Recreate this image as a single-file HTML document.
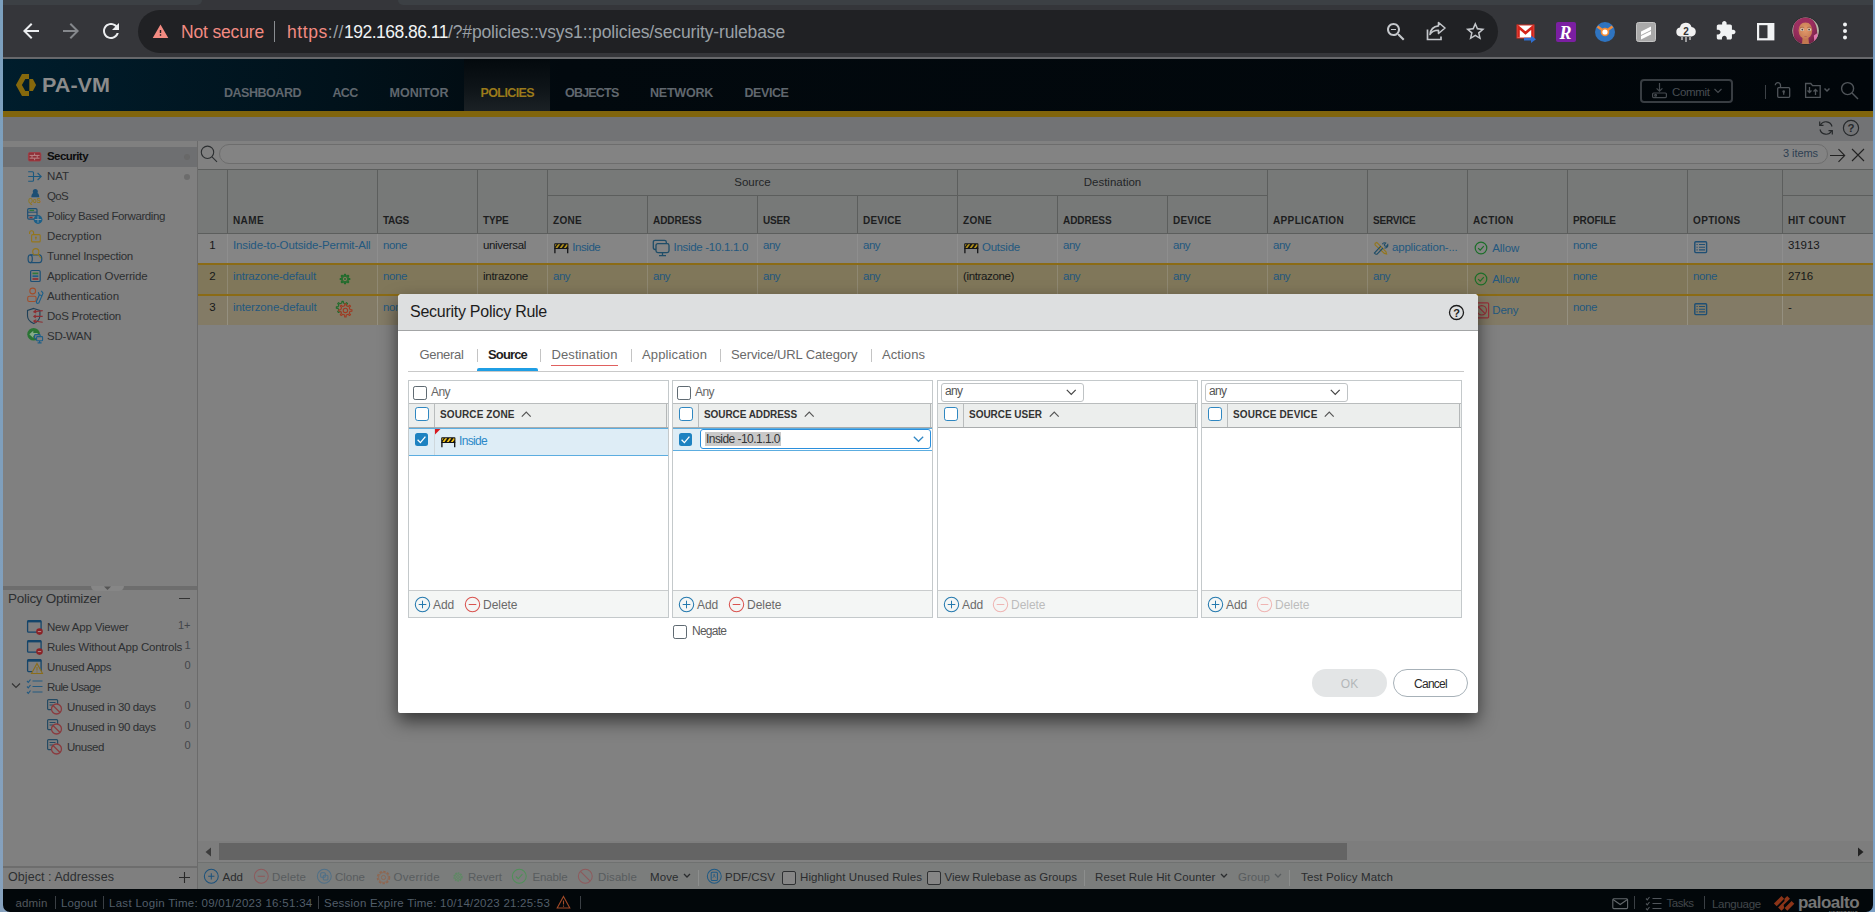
<!DOCTYPE html>
<html lang="en"><head><meta charset="utf-8"><title>PA-VM - Security Policy Rule</title>
<style>
html,body{margin:0;padding:0;overflow:hidden;}
body{width:1875px;height:912px;overflow:hidden;position:relative;background:#35363a;font-family:"Liberation Sans",sans-serif;}
#c{position:absolute;left:0;top:0;width:1875px;height:912px;overflow:hidden;}
#c>div,#c>svg,#c>span{position:absolute;}
#c>svg{overflow:visible;}
.t{white-space:pre;}
</style></head><body><div id="c">
<div style="left:0px;top:0px;width:1875px;height:59px;background:#35363a;"></div>
<div style="left:3px;top:0px;width:199px;height:4.7px;background:#3c4044;border-radius:0 0 7px 0;"></div>
<div style="left:398px;top:0px;width:1475px;height:4.7px;background:#3c4044;border-radius:0 0 0 7px;"></div>
<div style="left:0px;top:57px;width:1875px;height:2px;background:#67686b;"></div>
<div style="left:138px;top:10px;width:1360px;height:43px;background:#202124;border-radius:22px;"></div>
<svg style="left:18.5px;top:19.0px;" width="24" height="24" viewBox="0 0 24 24"><path fill="#eceef0" d="M20 11H7.83l5.59-5.59L12 4l-8 8 8 8 1.41-1.41L7.83 13H20v-2z"/></svg>
<svg style="left:58.5px;top:19.0px;" width="24" height="24" viewBox="0 0 24 24"><path fill="#85888c" d="M12 4l-1.41 1.41L16.17 11H4v2h12.17l-5.58 5.59L12 20l8-8z"/></svg>
<svg style="left:98.5px;top:19.0px;" width="24" height="24" viewBox="0 0 24 24"><path fill="#eceef0" d="M17.65 6.35C16.2 4.9 14.21 4 12 4c-4.42 0-7.99 3.58-7.99 8s3.57 8 7.99 8c3.73 0 6.84-2.55 7.73-6h-2.08c-.82 2.33-3.04 4-5.65 4-3.31 0-6-2.69-6-6s2.69-6 6-6c1.66 0 3.14.69 4.22 1.78L13 11h7V4l-2.35 2.35z"/></svg>
<svg style="left:152.0px;top:23.0px;" width="17" height="17" viewBox="0 0 24 24"><path fill="#f28b82" d="M1 21h22L12 2 1 21zm12-3h-2v-2h2v2zm0-4h-2v-4h2v4z"/></svg>
<span class="t" style="top:24px;font-size:17.5px;line-height:1;color:#f28b82;letter-spacing:-0.163px;left:181px;">Not secure</span>
<div style="left:274px;top:21px;width:1px;height:21px;background:#8a8d91;"></div>
<span class="t" style="top:24px;font-size:17.5px;line-height:1;color:#f28b82;letter-spacing:0.557px;left:287px;">https<span style="color:#9aa0a6">://</span></span>
<span class="t" style="top:24px;font-size:17.5px;line-height:1;color:#f1f3f4;letter-spacing:-0.510px;left:344px;">192.168.86.11</span>
<span class="t" style="top:24px;font-size:17.5px;line-height:1;color:#9aa0a6;letter-spacing:-0.138px;left:448px;">/?#policies::vsys1::policies/security-rulebase</span>
<svg style="left:1383.5px;top:20.0px;" width="24" height="24" viewBox="0 0 24 24"><path fill="#c4c7cb" d="M15.5 14h-.79l-.28-.27C15.41 12.59 16 11.11 16 9.5 16 5.91 13.09 3 9.5 3S3 5.91 3 9.5 5.91 16 9.5 16c1.61 0 3.09-.59 4.23-1.57l.27.28v.79l5 4.99L20.49 19l-4.99-5zm-6 0C7.01 14 5 11.99 5 9.5S7.01 5 9.5 5 14 7.01 14 9.5 11.99 14 9.5 14zM7 9h5v1H7z"/></svg>
<svg style="left:1425px;top:20px;" width="22" height="22" viewBox="0 0 22 22"><path fill="none" stroke="#c4c7cb" stroke-width="1.7" d="M2.5 9.5v10h13.5v-3"/><path fill="none" stroke="#c4c7cb" stroke-width="1.6" stroke-linejoin="round" d="M13.5 2.5l6.5 5.5-6.5 5.5v-3.3c-4.5 0-7 1.3-8.5 4.3 .5-5 3.5-8 8.5-8.6z"/></svg>
<svg style="left:1464.2px;top:20.0px;" width="22.6" height="22.6" viewBox="0 0 24 24"><path fill="#c4c7cb" d="M22 9.24l-7.19-.62L12 2 9.19 8.63 2 9.24l5.46 4.73L5.82 21 12 17.27 18.18 21l-1.63-7.03L22 9.24zM12 15.4l-3.76 2.27 1-4.28-3.32-2.88 4.38-.38L12 6.1l1.71 4.04 4.38.38-3.32 2.88 1 4.28L12 15.4z"/></svg>
<svg style="left:1515.5px;top:23px;" width="22" height="21" viewBox="0 0 22 21"><rect x="1" y="2" width="17" height="13" fill="#fff" stroke="#d93025" stroke-width="1"/><path d="M2.5 14.5V4l7 6 7-6v10.5" fill="none" stroke="#d4241a" stroke-width="2.6"/><path d="M8 14.8h7v-2.3l5 3.7-5 3.7v-2.3H8z" fill="#2f6fd0"/></svg>
<div style="left:1556px;top:22px;width:19.5px;height:19.5px;background:#7b1fa2;border-radius:2px;"></div>
<span class="t" style="top:24px;font-size:18px;line-height:1;color:#fff;font-weight:700;left:1565.5px;transform:translateX(-50%);font-family:'Liberation Serif',serif;font-style:italic;">R</span>
<svg style="left:1594.4px;top:20.7px;" width="22" height="22" viewBox="0 0 22 22"><circle cx="11" cy="11" r="10" fill="#2f74c0"/><path d="M3.5 5.5L11 11l7.5-5.5" fill="none" stroke="#f28c38" stroke-width="2.6"/><circle cx="11" cy="11" r="4.3" fill="#f28c38"/><circle cx="11" cy="11" r="2.6" fill="#fff"/></svg>
<svg style="left:1635.5px;top:22px;" width="20" height="20" viewBox="0 0 20 20"><rect x=".5" y=".5" width="19" height="19" rx="2" fill="#a9a9a9" stroke="#c4c4c4"/><path d="M5 9.5l10-5v3.5l-10 5zM5 14l10-5v3.5l-10 5z" fill="#fff"/></svg>
<svg style="left:1674.5px;top:21px;" width="22" height="23" viewBox="0 0 22 23"><path d="M5.5 15.5a4.5 4.5 0 0 1-.6-8.9 6 6 0 0 1 11.6-.6 4.8 4.8 0 0 1 .3 9.5z" fill="#f1f1f1"/><path d="M7 16v3M11 16v5M15 16v3" stroke="#e0e0e0" stroke-width="1.2"/><text x="11" y="13.5" font-family="Liberation Sans" font-size="10" font-weight="700" fill="#333" text-anchor="middle">2</text></svg>
<svg style="left:1714.8px;top:20.3px;" width="21.4" height="21.4" viewBox="0 0 24 24"><path fill="#f1f3f4" d="M20.5 11H19V7c0-1.1-.9-2-2-2h-4V3.5C13 2.12 11.88 1 10.5 1S8 2.12 8 3.5V5H4c-1.1 0-1.99.9-1.99 2v3.8H3.5c1.49 0 2.7 1.21 2.7 2.7s-1.21 2.7-2.7 2.7H2V20c0 1.1.9 2 2 2h3.8v-1.5c0-1.49 1.21-2.7 2.7-2.7 1.49 0 2.7 1.21 2.7 2.7V22H17c1.1 0 2-.9 2-2v-4h1.5c1.38 0 2.5-1.12 2.5-2.5S21.88 11 20.5 11z"/></svg>
<svg style="left:1757px;top:23px;" width="17.4" height="17.4" viewBox="0 0 17.4 17.4"><rect x="1.1" y="1.1" width="15.2" height="15.2" fill="none" stroke="#f1f3f4" stroke-width="2.2"/><rect x="10.500" y="1" width="6" height="15.400" fill="#f1f3f4"/></svg>
<svg style="left:1790px;top:15px;" width="32" height="32" viewBox="1790 15 32 32"><defs><clipPath id="av"><circle cx="1805.600" cy="30.800" r="13.300"/></clipPath><radialGradient id="hg" cx=".42" cy=".25" r=".85"><stop offset="0" stop-color="#ad386c"/><stop offset=".6" stop-color="#8e2a57"/><stop offset="1" stop-color="#5e1c3c"/></radialGradient><radialGradient id="fg" cx=".5" cy=".45" r=".6"><stop offset="0" stop-color="#e39a6c"/><stop offset="1" stop-color="#c47a52"/></radialGradient></defs><circle cx="1805.600" cy="30.800" r="14" fill="#2a2b2e"/><g clip-path="url(#av)"><rect x="1790" y="15" width="32" height="32" fill="#b9b7a7"/><path d="M1804.500 17.300c-7.500 0-11.800 6-11.300 14.500 .2 6 2 11 6 14.200h14c3-3 4.300-7.500 4-13.500-.2-9.500-4.500-15.200-12.700-15.200z" fill="url(#hg)"/><path d="M1802.600 37.500h5.800l.8 8.500h-7.400z" fill="#c27850"/><ellipse cx="1805.400" cy="30.600" rx="6.800" ry="8.500" fill="url(#fg)"/><path d="M1797.600 28c-.3-6.500 3.500-9.800 8-9.800s8.300 3.300 8 9.800c-1.800-4-4.500-5.600-8-5.600s-6.200 1.600-8 5.600z" fill="#9c2e5e"/><ellipse cx="1802.100" cy="29.700" rx="1.900" ry="1.400" fill="#d6d0c6"/><ellipse cx="1809.300" cy="29.700" rx="1.900" ry="1.400" fill="#d6d0c6"/><circle cx="1802.300" cy="29.600" r=".9" fill="#5b3b2b"/><circle cx="1809.100" cy="29.600" r=".9" fill="#5b3b2b"/><path d="M1800 27.700q2.100-1 4.200-.2M1807.200 27.500q2.100-.8 4.200.2" stroke="#8a5a42" stroke-width=".5" fill="none"/><path d="M1803.900 36.400q1.700-.7 3.400 0-1.700 1.300-3.400 0z" fill="#b5625c"/><path d="M1813.800 35.500l3.700-2.500v6.500l-3.200 2z" fill="#de78ae"/></g></svg>
<svg style="left:1840px;top:19px;" width="10" height="25" viewBox="0 0 10 25"><circle cx="5" cy="5.5" r="2" fill="#f1f3f4"/><circle cx="5" cy="12" r="2" fill="#f1f3f4"/><circle cx="5" cy="18.5" r="2" fill="#f1f3f4"/></svg>
<div style="left:3px;top:59px;width:1870px;height:52px;background:linear-gradient(90deg,#001d2c 0px,#01121b 330px,#02090e 560px,#01060a 100%);"></div>
<div style="left:464px;top:59px;width:86px;height:52px;background:linear-gradient(180deg,#03090d 0%,#0e1418 55%,#1b2125 100%);"></div>
<div style="left:3px;top:111px;width:1870px;height:6px;background:#81650c;"></div>
<svg style="left:15px;top:73px;" width="22" height="24" viewBox="0 0 22 24"><path fill="#85680c" d="M7 1h7v5.100h-3.700L6.900 12l3.400 5.900H14V23H7L.9 12z"/><path fill="#85680c" d="M14.300 6.100h3.600L21.100 12l-3.200 5.900h-3.600z"/></svg>
<span class="t" style="top:76px;font-size:19.5px;line-height:1;color:#8b8b8b;font-weight:700;transform:scaleX(1.1077);transform-origin:0 0;left:42px;">PA-VM</span>
<span class="t" style="top:87px;font-size:12.5px;line-height:1;color:#60676e;font-weight:700;letter-spacing:-0.472px;left:224px;">DASHBOARD</span>
<span class="t" style="top:87px;font-size:12.5px;line-height:1;color:#60676e;font-weight:700;letter-spacing:-0.698px;left:332.5px;">ACC</span>
<span class="t" style="top:87px;font-size:12.5px;line-height:1;color:#60676e;font-weight:700;letter-spacing:0.029px;left:389.5px;">MONITOR</span>
<span class="t" style="top:87px;font-size:12.5px;line-height:1;color:#60676e;font-weight:700;letter-spacing:-0.792px;left:565px;">OBJECTS</span>
<span class="t" style="top:87px;font-size:12.5px;line-height:1;color:#60676e;font-weight:700;letter-spacing:-0.225px;left:650px;">NETWORK</span>
<span class="t" style="top:87px;font-size:12.5px;line-height:1;color:#60676e;font-weight:700;letter-spacing:-0.424px;left:744.5px;">DEVICE</span>
<span class="t" style="top:87px;font-size:12.5px;line-height:1;color:#9b7a1a;font-weight:700;letter-spacing:-0.605px;left:480.5px;">POLICIES</span>
<div style="left:1640px;top:79px;width:93px;height:24px;border:2px solid #383d42;border-radius:4px;box-sizing:border-box;"></div>
<svg style="left:1651px;top:82px;" width="17" height="17" viewBox="0 0 17 17"><g fill="none" stroke="#464b50" stroke-width="1.2"><path d="M8.5 1v8M5.6 6.3l2.9 2.9 2.9-2.9"/><rect x="1.6" y="11" width="13.8" height="4.6" rx="1"/><circle cx="4.6" cy="13.3" r=".9"/></g></svg>
<span class="t" style="top:87px;font-size:11.5px;line-height:1;color:#484d52;letter-spacing:-0.354px;left:1672px;">Commit</span>
<svg style="left:1713px;top:87px;" width="10" height="8" viewBox="0 0 10 8"><path d="M1.5 2l3.5 3.5L8.500 2" fill="none" stroke="#464b50" stroke-width="1.2"/></svg>
<div style="left:1765px;top:85px;width:1px;height:14px;background:#3c4146;"></div>
<svg style="left:1774px;top:81px;" width="18" height="18" viewBox="0 0 18 18"><g fill="none" stroke="#50555a" stroke-width="1.3"><rect x="3.7" y="6.7" width="12" height="9.6" rx="1"/><path d="M6.5 6.5V4.2a2.6 2.6 0 0 0-5.2 0"/></g><circle cx="9.7" cy="10.6" r="1.3" fill="#50555a"/><path d="M9.7 11v2.8" stroke="#50555a" stroke-width="1.3"/></svg>
<svg style="left:1804px;top:82px;" width="28" height="17" viewBox="0 0 28 17"><g fill="none" stroke="#50555a" stroke-width="1.3"><path d="M1.6 1.5h5.2l1.8 2.2h7.6v11.6H1.600z"/><path d="M5.5 5v5.5M3.500 8.500l2 2 2-2M11.500 13V7.500M9.500 9.500l2-2 2 2"/><path d="M20.5 6.500l2.500 2.500 2.500-2.500" stroke-width="1.5"/></g></svg>
<svg style="left:1840px;top:81px;" width="19" height="19" viewBox="0 0 19 19"><g fill="none" stroke="#50555a" stroke-width="1.4"><circle cx="7.600" cy="7.600" r="6"/><path d="M12 12l6 6"/></g></svg>
<div style="left:3px;top:117px;width:1870px;height:24px;background:#727375;"></div>
<svg style="left:1817px;top:118.8px;" width="18" height="18" viewBox="0 0 18 18"><g fill="none" stroke="#26292b" stroke-width="1.200" transform="translate(18 0) scale(-1 1)"><path d="M3 7.500a6.300 6.300 0 0 1 11.600-1.500M15 10.500a6.300 6.300 0 0 1-11.600 1.500"/><path d="M15.300 2.500v3.800h-3.800M2.700 15.500v-3.800h3.800"/></g></svg>
<svg style="left:1842px;top:119px;" width="18" height="18" viewBox="0 0 18 18"><circle cx="9" cy="9" r="7.600" fill="none" stroke="#26292b" stroke-width="1.2"/><text x="9" y="13" font-family="Liberation Sans" font-size="11.500" font-weight="700" fill="#26292b" text-anchor="middle">?</text></svg>
<div style="left:3px;top:141px;width:194px;height:725px;background:#808080;"></div>
<div style="left:197px;top:141px;width:1px;height:748px;background:#6b6b6b;"></div>
<div style="left:3px;top:147px;width:194px;height:20px;background:#6e6f71;"></div>
<div style="left:184px;top:154px;width:6px;height:6px;background:#686868;border-radius:3px;"></div>
<div style="left:184px;top:174px;width:6px;height:6px;background:#6c6c6c;border-radius:3px;"></div>
<span class="t" style="top:151px;font-size:11.5px;line-height:1;color:#0c0c0d;font-weight:700;letter-spacing:-0.549px;left:47px;">Security</span>
<span class="t" style="top:171px;font-size:11.5px;line-height:1;color:#2d2f31;letter-spacing:-0.052px;left:47px;">NAT</span>
<span class="t" style="top:191px;font-size:11.5px;line-height:1;color:#2d2f31;letter-spacing:-0.672px;left:47px;">QoS</span>
<span class="t" style="top:211px;font-size:11.5px;line-height:1;color:#2d2f31;letter-spacing:-0.400px;left:47px;">Policy Based Forwarding</span>
<span class="t" style="top:231px;font-size:11.5px;line-height:1;color:#2d2f31;letter-spacing:-0.047px;left:47px;">Decryption</span>
<span class="t" style="top:251px;font-size:11.5px;line-height:1;color:#2d2f31;letter-spacing:-0.256px;left:47px;">Tunnel Inspection</span>
<span class="t" style="top:271px;font-size:11.5px;line-height:1;color:#2d2f31;letter-spacing:-0.153px;left:47px;">Application Override</span>
<span class="t" style="top:291px;font-size:11.5px;line-height:1;color:#2d2f31;letter-spacing:-0.064px;left:47px;">Authentication</span>
<span class="t" style="top:311px;font-size:11.5px;line-height:1;color:#2d2f31;letter-spacing:-0.240px;left:47px;">DoS Protection</span>
<span class="t" style="top:331px;font-size:11.5px;line-height:1;color:#2d2f31;letter-spacing:-0.286px;left:47px;">SD-WAN</span>
<svg style="left:26px;top:149px;" width="18" height="14" viewBox="26 149 18 14"><rect x="28.400" y="152.600" width="12.400" height="8.400" rx="1.400" fill="#8f3038" stroke="#a63a43" stroke-width=".8"/><path d="M29.600 155.400h10M29.600 158.200h10" stroke="#c39a9c" stroke-width=".8"/><path d="M34.600 153.400v1.600M32 155.800v2M37.200 155.800v2M34.600 158.600v1.600" stroke="#c39a9c" stroke-width=".8"/></svg>
<svg style="left:26px;top:169px;" width="18" height="15" viewBox="26 169 18 15"><g fill="none" stroke="#1c587e" stroke-width="1.100"><path d="M28.200 176.500h12.600M37.600 173l3.600 3.500-3.600 3.500M28.200 171.700h4.300a1 1 0 0 1 1 1v7.600a1 1 0 0 1-1 1h-4.300"/></g></svg>
<svg style="left:26px;top:187px;" width="18" height="18" viewBox="26 187 18 18"><circle cx="35.300" cy="191.600" r="2.500" fill="#1d4f74"/><path d="M31.300 197.200c0-3.300 1.700-4.600 4-4.600s4 1.300 4 4.600z" fill="#1d4f74"/><text x="34.900" y="203" font-family="Liberation Sans" font-size="7.200" font-weight="700" fill="#94761c" text-anchor="middle" textLength="12.600" lengthAdjust="spacingAndGlyphs">QoS</text></svg>
<svg style="left:26px;top:207px;" width="18" height="18" viewBox="26 207 18 18"><rect x="27.700" y="208.600" width="9.300" height="10.600" rx="1.200" fill="none" stroke="#1d4f74" stroke-width="1.200"/><path d="M27.700 212.200h9.300M27.700 215.700h9.300" stroke="#1d4f74" stroke-width="1"/><path d="M29.500 210.400h4.600" stroke="#2f7a3a" stroke-width="1.300"/><path d="M29.500 217.500h3" stroke="#8c2f33" stroke-width="1.300"/><circle cx="38" cy="219.500" r="4.400" fill="#1d5f88"/><path d="M38 216.200v6.600M34.700 219.500h6.600" stroke="#8a949c" stroke-width=".9"/></svg>
<svg style="left:26px;top:228px;" width="18" height="16" viewBox="26 228 18 16"><g fill="none" stroke="#94761c" stroke-width="1.100"><rect x="31.600" y="234.600" width="8.600" height="7.300" rx="1"/><path d="M33.600 234.600v-1.900a2 2 0 0 0-4 0v1.300"/></g><circle cx="35.900" cy="237.500" r="1" fill="#94761c"/><path d="M35.900 237.500v2.200" stroke="#94761c" stroke-width="1"/></svg>
<svg style="left:26px;top:247px;" width="18" height="17" viewBox="26 247 18 17"><g fill="none" stroke="#1d4f74" stroke-width="1.200"><path d="M30.200 254.800h9a2.600 3.900 0 0 1 0 7.800h-9"/><ellipse cx="30.200" cy="258.700" rx="2.100" ry="3.900"/></g><g fill="none" stroke="#94761c" stroke-width="1.100"><circle cx="35.800" cy="251.700" r="3.100"/><path d="M37.900 254l3 4.200"/></g></svg>
<svg style="left:26px;top:268px;" width="18" height="16" viewBox="26 268 18 16"><rect x="30.600" y="270.500" width="9.600" height="11" rx="1.300" fill="none" stroke="#1d4f74" stroke-width="1.200"/><path d="M32.500 273.400h5.800" stroke="#2f7a3a" stroke-width="1.700"/><path d="M32.500 276.200h5.800" stroke="#1d5f88" stroke-width="1.700"/><path d="M32.500 279h5.800" stroke="#8c2f33" stroke-width="1.700"/></svg>
<svg style="left:26px;top:287px;" width="18" height="18" viewBox="26 287 18 18"><g fill="none" stroke="#a04e2c" stroke-width="1.100"><circle cx="32.700" cy="291" r="2.900"/><rect x="27.700" y="296.300" width="8.400" height="5.200" rx="1.600"/></g><g fill="none" stroke="#1d5f88" stroke-width="1.100"><path d="M36.200 302l3.200-7.300M38.700 303.200l3.200-7.300"/><path d="M36.200 302l.9 1.400 1.600-.2"/><path d="M38.300 292.300l1 2.600 2.700.8 1-2.600-1.700-2.300"/></g></svg>
<svg style="left:26px;top:307px;" width="18" height="18" viewBox="26 307 18 18"><path d="M33.700 308.400l6.200 2.100v5.300c0 3.800-2.700 6.200-6.200 7.800-3.500-1.600-6.200-4-6.200-7.800v-5.300z" fill="none" stroke="#1f4058" stroke-width="1.100"/><g stroke="#8c2f33" stroke-width="1.100" fill="none"><path d="M42.700 310.600l-8.700 1.200M42.700 316.400h-8.700M42.700 322.200l-8.700-1.200"/><path d="M36 310l-2.200 1.800 2.500 1.300M35.800 314.900l-2 1.500 2 1.500M36.300 319.700l-2.500 1.300 2.200 1.800"/></g></svg>
<svg style="left:26px;top:327px;" width="18" height="17" viewBox="26 327 18 17"><circle cx="33.600" cy="334.300" r="6.300" fill="#2a7434"/><path d="M29.300 334.300l4-3.600v2.200h4.300v2.800h-4.300v2.200z" fill="#86ab8a"/><g fill="#808080" stroke="#1d5f88" stroke-width="1.100"><rect x="34.600" y="334.600" width="5.600" height="4" rx=".8"/><rect x="36.600" y="336.600" width="6" height="4.200" rx=".8"/></g><path d="M39.600 341v1.700M37.600 342.900h4" stroke="#1d5f88" stroke-width="1.100"/></svg>
<div style="left:3px;top:586px;width:194px;height:4px;background:#6d6d6d;"></div>
<div style="left:91px;top:586px;width:33px;height:5px;background:#868686;border-radius:0 0 5px 5px;"></div>
<svg style="left:103px;top:586px;" width="9" height="5" viewBox="0 0 9 5"><path d="M1 0.500h7l-3.500 3.500z" fill="#555"/></svg>
<span class="t" style="top:592px;font-size:13.5px;line-height:1;color:#2d2f31;letter-spacing:-0.283px;left:8px;">Policy Optimizer</span>
<div style="left:179px;top:598px;width:11px;height:1px;background:#333;"></div>
<span class="t" style="top:622px;font-size:11.5px;line-height:1;color:#2d2f31;letter-spacing:-0.191px;left:47px;">New App Viewer</span>
<span class="t" style="top:620px;font-size:11px;line-height:1;color:#43464a;right:1684.5px;">1+</span>
<svg style="left:26px;top:619px;" width="18" height="18" viewBox="0 0 18 18"><rect x="1.600" y="1.600" width="13.500" height="11.600" rx="1" fill="none" stroke="#15456a" stroke-width="1.300"/><path d="M1.600 2.400h13.500" stroke="#15456a" stroke-width="2"/><circle cx="13.500" cy="12.600" r="3.300" fill="#8a2226"/><path d="M11.800 12.600h3.400" stroke="#b08a8c" stroke-width="1"/></svg>
<span class="t" style="top:642px;font-size:11.5px;line-height:1;color:#2d2f31;letter-spacing:-0.216px;left:47px;">Rules Without App Controls</span>
<span class="t" style="top:640px;font-size:11px;line-height:1;color:#43464a;right:1684.5px;">1</span>
<svg style="left:26px;top:639px;" width="18" height="18" viewBox="0 0 18 18"><rect x="1.600" y="1.600" width="13.500" height="11.600" rx="1" fill="none" stroke="#15456a" stroke-width="1.300"/><path d="M1.600 2.400h13.500" stroke="#15456a" stroke-width="2"/><circle cx="13.500" cy="12.600" r="3.300" fill="#8a2226"/><path d="M11.800 12.600h3.400" stroke="#b08a8c" stroke-width="1"/></svg>
<span class="t" style="top:662px;font-size:11.5px;line-height:1;color:#2d2f31;letter-spacing:-0.402px;left:47px;">Unused Apps</span>
<span class="t" style="top:660px;font-size:11px;line-height:1;color:#43464a;right:1684.5px;">0</span>
<svg style="left:26px;top:658px;" width="18" height="18" viewBox="0 0 18 18"><rect x="1.600" y="1.600" width="13.500" height="12" rx="1" fill="none" stroke="#15456a" stroke-width="1.300"/><path d="M1.600 2.600h13.500" stroke="#15456a" stroke-width="2.200"/><path d="M11 5.500l5.500 10h-11z" fill="#808080" stroke="#8a6d1a" stroke-width="1.100"/><path d="M11 9v3.500M11 13.500v1" stroke="#8a6d1a" stroke-width="1"/></svg>
<span class="t" style="top:682px;font-size:11.5px;line-height:1;color:#2d2f31;letter-spacing:-0.659px;left:47px;">Rule Usage</span>
<svg style="left:11px;top:682px;" width="10" height="8" viewBox="0 0 10 8"><path d="M1 1.500l4 4 4-4" fill="none" stroke="#333" stroke-width="1.100"/></svg>
<svg style="left:26px;top:678px;" width="18" height="18" viewBox="0 0 18 18"><g fill="none" stroke="#245a80" stroke-width="1.200"><path d="M6.500 3h10M6.500 8.500h10M6.500 14h10"/><path d="M1 3l1.300 1.300 2.200-2.800M1 8.500l1.300 1.300 2.200-2.800M1 14l1.300 1.300 2.200-2.800" stroke-dasharray="none"/></g></svg>
<span class="t" style="top:702px;font-size:11.5px;line-height:1;color:#2d2f31;letter-spacing:-0.398px;left:67px;">Unused in 30 days</span>
<span class="t" style="top:700px;font-size:11px;line-height:1;color:#43464a;right:1684.5px;">0</span>
<svg style="left:46px;top:698px;" width="18" height="18" viewBox="0 0 18 18"><g fill="none" stroke="#244a63" stroke-width="1.200"><rect x="1.600" y="1.600" width="10" height="10" rx="1"/><path d="M3.500 4.500h6M3.500 7h4"/></g><circle cx="10.500" cy="11" r="5" fill="#808080" stroke="#8a3a3e" stroke-width="1.300"/><path d="M7 7.500l7 7" stroke="#8a3a3e" stroke-width="1.300"/></svg>
<span class="t" style="top:722px;font-size:11.5px;line-height:1;color:#2d2f31;letter-spacing:-0.398px;left:67px;">Unused in 90 days</span>
<span class="t" style="top:720px;font-size:11px;line-height:1;color:#43464a;right:1684.5px;">0</span>
<svg style="left:46px;top:718px;" width="18" height="18" viewBox="0 0 18 18"><g fill="none" stroke="#244a63" stroke-width="1.200"><rect x="1.600" y="1.600" width="10" height="10" rx="1"/><path d="M3.500 4.500h6M3.500 7h4"/></g><circle cx="10.500" cy="11" r="5" fill="#808080" stroke="#8a3a3e" stroke-width="1.300"/><path d="M7 7.500l7 7" stroke="#8a3a3e" stroke-width="1.300"/></svg>
<span class="t" style="top:742px;font-size:11.5px;line-height:1;color:#2d2f31;letter-spacing:-0.440px;left:67px;">Unused</span>
<span class="t" style="top:740px;font-size:11px;line-height:1;color:#43464a;right:1684.5px;">0</span>
<svg style="left:46px;top:738px;" width="18" height="18" viewBox="0 0 18 18"><g fill="none" stroke="#244a63" stroke-width="1.200"><rect x="1.600" y="1.600" width="10" height="10" rx="1"/><path d="M3.500 4.500h6M3.500 7h4"/></g><circle cx="10.500" cy="11" r="5" fill="#808080" stroke="#8a3a3e" stroke-width="1.300"/><path d="M7 7.500l7 7" stroke="#8a3a3e" stroke-width="1.300"/></svg>
<div style="left:3px;top:866px;width:194px;height:2px;background:#6d6d6d;"></div>
<div style="left:3px;top:868px;width:194px;height:21px;background:#7f7f7f;"></div>
<span class="t" style="top:871px;font-size:12.5px;line-height:1;color:#2d2f31;letter-spacing:0.060px;left:8px;">Object : Addresses</span>
<svg style="left:179px;top:872px;" width="11" height="11" viewBox="0 0 11 11"><path d="M5.500 0v11M0 5.500h11" stroke="#2a2a2a" stroke-width="1.100"/></svg>
<div style="left:198px;top:141px;width:1675px;height:725px;background:#818181;"></div>
<svg style="left:199px;top:144px;" width="20" height="20" viewBox="0 0 20 20"><g fill="none" stroke="#2c2f31" stroke-width="1.100"><circle cx="8.500" cy="8.300" r="6.200"/><path d="M13 12.800l5 5"/></g></svg>
<div style="left:219px;top:144px;width:1609px;height:20px;background:#838383;border:1px solid #6d6d6d;border-radius:10px;box-sizing:border-box;"></div>
<span class="t" style="top:148px;font-size:11px;line-height:1;color:#2e3f52;letter-spacing:-0.067px;right:57px;">3 items</span>
<svg style="left:1829.5px;top:148px;" width="16" height="14" viewBox="0 0 16 14"><path d="M0 7.500h14.500M8.500 1.200l6.200 6.300-6.200 6.300" fill="none" stroke="#222" stroke-width="1.100"/></svg>
<svg style="left:1851px;top:148px;" width="14" height="14" viewBox="0 0 14 14"><path d="M1 1l12 12M13 1L1 13" fill="none" stroke="#222" stroke-width="1.100"/></svg>
<div style="left:198px;top:169px;width:1675px;height:65px;background:#777978;"></div>
<div style="left:198px;top:169px;width:1675px;height:1px;background:#5c5e5d;"></div>
<div style="left:198px;top:233px;width:1675px;height:1px;background:#5c5e5d;"></div>
<div style="left:227px;top:170px;width:1px;height:63px;background:#5c5e5d;"></div>
<div style="left:377px;top:170px;width:1px;height:63px;background:#5c5e5d;"></div>
<div style="left:477px;top:170px;width:1px;height:63px;background:#5c5e5d;"></div>
<div style="left:547px;top:170px;width:1px;height:63px;background:#5c5e5d;"></div>
<div style="left:647px;top:170px;width:1px;height:63px;background:#5c5e5d;"></div>
<div style="left:757px;top:170px;width:1px;height:63px;background:#5c5e5d;"></div>
<div style="left:857px;top:170px;width:1px;height:63px;background:#5c5e5d;"></div>
<div style="left:957px;top:170px;width:1px;height:63px;background:#5c5e5d;"></div>
<div style="left:1057px;top:170px;width:1px;height:63px;background:#5c5e5d;"></div>
<div style="left:1167px;top:170px;width:1px;height:63px;background:#5c5e5d;"></div>
<div style="left:1267px;top:170px;width:1px;height:63px;background:#5c5e5d;"></div>
<div style="left:1367px;top:170px;width:1px;height:63px;background:#5c5e5d;"></div>
<div style="left:1467px;top:170px;width:1px;height:63px;background:#5c5e5d;"></div>
<div style="left:1567px;top:170px;width:1px;height:63px;background:#5c5e5d;"></div>
<div style="left:1687px;top:170px;width:1px;height:63px;background:#5c5e5d;"></div>
<div style="left:1782px;top:170px;width:1px;height:63px;background:#5c5e5d;"></div>
<div style="left:548px;top:195px;width:719px;height:1px;background:#5c5e5d;"></div>
<div style="left:1783px;top:195px;width:90px;height:1px;background:#5c5e5d;"></div>
<div style="left:647px;top:170px;width:1px;height:25px;background:#777978;"></div>
<div style="left:757px;top:170px;width:1px;height:25px;background:#777978;"></div>
<div style="left:857px;top:170px;width:1px;height:25px;background:#777978;"></div>
<div style="left:1057px;top:170px;width:1px;height:25px;background:#777978;"></div>
<div style="left:1167px;top:170px;width:1px;height:25px;background:#777978;"></div>
<span class="t" style="top:177px;font-size:11.5px;line-height:1;color:#232527;left:752.5px;transform:translateX(-50%);">Source</span>
<span class="t" style="top:177px;font-size:11.5px;line-height:1;color:#232527;left:1112.5px;transform:translateX(-50%);">Destination</span>
<span class="t" style="top:216px;font-size:10px;line-height:1;color:#1d1e1f;font-weight:700;letter-spacing:0.387px;left:233px;">NAME</span>
<span class="t" style="top:216px;font-size:10px;line-height:1;color:#1d1e1f;font-weight:700;letter-spacing:-0.262px;left:383px;">TAGS</span>
<span class="t" style="top:216px;font-size:10px;line-height:1;color:#1d1e1f;font-weight:700;letter-spacing:-0.156px;left:483px;">TYPE</span>
<span class="t" style="top:216px;font-size:10px;line-height:1;color:#1d1e1f;font-weight:700;letter-spacing:0.305px;left:553px;">ZONE</span>
<span class="t" style="top:216px;font-size:10px;line-height:1;color:#1d1e1f;font-weight:700;letter-spacing:-0.058px;left:653px;">ADDRESS</span>
<span class="t" style="top:216px;font-size:10px;line-height:1;color:#1d1e1f;font-weight:700;letter-spacing:-0.199px;left:763px;">USER</span>
<span class="t" style="top:216px;font-size:10px;line-height:1;color:#1d1e1f;font-weight:700;letter-spacing:0.211px;left:863px;">DEVICE</span>
<span class="t" style="top:216px;font-size:10px;line-height:1;color:#1d1e1f;font-weight:700;letter-spacing:0.305px;left:963px;">ZONE</span>
<span class="t" style="top:216px;font-size:10px;line-height:1;color:#1d1e1f;font-weight:700;letter-spacing:-0.058px;left:1063px;">ADDRESS</span>
<span class="t" style="top:216px;font-size:10px;line-height:1;color:#1d1e1f;font-weight:700;letter-spacing:0.211px;left:1173px;">DEVICE</span>
<span class="t" style="top:216px;font-size:10px;line-height:1;color:#1d1e1f;font-weight:700;letter-spacing:0.359px;left:1273px;">APPLICATION</span>
<span class="t" style="top:216px;font-size:10px;line-height:1;color:#1d1e1f;font-weight:700;letter-spacing:-0.176px;left:1373px;">SERVICE</span>
<span class="t" style="top:216px;font-size:10px;line-height:1;color:#1d1e1f;font-weight:700;letter-spacing:0.359px;left:1473px;">ACTION</span>
<span class="t" style="top:216px;font-size:10px;line-height:1;color:#1d1e1f;font-weight:700;letter-spacing:-0.049px;left:1573px;">PROFILE</span>
<span class="t" style="top:216px;font-size:10px;line-height:1;color:#1d1e1f;font-weight:700;letter-spacing:0.355px;left:1693px;">OPTIONS</span>
<span class="t" style="top:216px;font-size:10px;line-height:1;color:#1d1e1f;font-weight:700;letter-spacing:0.394px;left:1788px;">HIT COUNT</span>
<div style="left:198px;top:234px;width:1675px;height:29px;background:#858585;"></div>
<div style="left:198px;top:263px;width:1675px;height:2px;background:#8b6b15;"></div>
<div style="left:198px;top:265px;width:1675px;height:29px;background:#80775a;"></div>
<div style="left:198px;top:294px;width:1675px;height:2px;background:#8b6b15;"></div>
<div style="left:198px;top:296px;width:1675px;height:29px;background:#837b66;"></div>
<div style="left:227px;top:234px;width:1px;height:29px;background:#8e8e8e;"></div>
<div style="left:227px;top:265px;width:1px;height:29px;background:#8f8872;"></div>
<div style="left:227px;top:296px;width:1px;height:29px;background:#959080;"></div>
<div style="left:377px;top:234px;width:1px;height:29px;background:#8e8e8e;"></div>
<div style="left:377px;top:265px;width:1px;height:29px;background:#8f8872;"></div>
<div style="left:377px;top:296px;width:1px;height:29px;background:#959080;"></div>
<div style="left:477px;top:234px;width:1px;height:29px;background:#8e8e8e;"></div>
<div style="left:477px;top:265px;width:1px;height:29px;background:#8f8872;"></div>
<div style="left:477px;top:296px;width:1px;height:29px;background:#959080;"></div>
<div style="left:547px;top:234px;width:1px;height:29px;background:#8e8e8e;"></div>
<div style="left:547px;top:265px;width:1px;height:29px;background:#8f8872;"></div>
<div style="left:547px;top:296px;width:1px;height:29px;background:#959080;"></div>
<div style="left:647px;top:234px;width:1px;height:29px;background:#8e8e8e;"></div>
<div style="left:647px;top:265px;width:1px;height:29px;background:#8f8872;"></div>
<div style="left:647px;top:296px;width:1px;height:29px;background:#959080;"></div>
<div style="left:757px;top:234px;width:1px;height:29px;background:#8e8e8e;"></div>
<div style="left:757px;top:265px;width:1px;height:29px;background:#8f8872;"></div>
<div style="left:757px;top:296px;width:1px;height:29px;background:#959080;"></div>
<div style="left:857px;top:234px;width:1px;height:29px;background:#8e8e8e;"></div>
<div style="left:857px;top:265px;width:1px;height:29px;background:#8f8872;"></div>
<div style="left:857px;top:296px;width:1px;height:29px;background:#959080;"></div>
<div style="left:957px;top:234px;width:1px;height:29px;background:#8e8e8e;"></div>
<div style="left:957px;top:265px;width:1px;height:29px;background:#8f8872;"></div>
<div style="left:957px;top:296px;width:1px;height:29px;background:#959080;"></div>
<div style="left:1057px;top:234px;width:1px;height:29px;background:#8e8e8e;"></div>
<div style="left:1057px;top:265px;width:1px;height:29px;background:#8f8872;"></div>
<div style="left:1057px;top:296px;width:1px;height:29px;background:#959080;"></div>
<div style="left:1167px;top:234px;width:1px;height:29px;background:#8e8e8e;"></div>
<div style="left:1167px;top:265px;width:1px;height:29px;background:#8f8872;"></div>
<div style="left:1167px;top:296px;width:1px;height:29px;background:#959080;"></div>
<div style="left:1267px;top:234px;width:1px;height:29px;background:#8e8e8e;"></div>
<div style="left:1267px;top:265px;width:1px;height:29px;background:#8f8872;"></div>
<div style="left:1267px;top:296px;width:1px;height:29px;background:#959080;"></div>
<div style="left:1367px;top:234px;width:1px;height:29px;background:#8e8e8e;"></div>
<div style="left:1367px;top:265px;width:1px;height:29px;background:#8f8872;"></div>
<div style="left:1367px;top:296px;width:1px;height:29px;background:#959080;"></div>
<div style="left:1467px;top:234px;width:1px;height:29px;background:#8e8e8e;"></div>
<div style="left:1467px;top:265px;width:1px;height:29px;background:#8f8872;"></div>
<div style="left:1467px;top:296px;width:1px;height:29px;background:#959080;"></div>
<div style="left:1567px;top:234px;width:1px;height:29px;background:#8e8e8e;"></div>
<div style="left:1567px;top:265px;width:1px;height:29px;background:#8f8872;"></div>
<div style="left:1567px;top:296px;width:1px;height:29px;background:#959080;"></div>
<div style="left:1687px;top:234px;width:1px;height:29px;background:#8e8e8e;"></div>
<div style="left:1687px;top:265px;width:1px;height:29px;background:#8f8872;"></div>
<div style="left:1687px;top:296px;width:1px;height:29px;background:#959080;"></div>
<div style="left:1782px;top:234px;width:1px;height:29px;background:#8e8e8e;"></div>
<div style="left:1782px;top:265px;width:1px;height:29px;background:#8f8872;"></div>
<div style="left:1782px;top:296px;width:1px;height:29px;background:#959080;"></div>
<span class="t" style="top:240px;font-size:11.5px;line-height:1;color:#161718;left:212.5px;transform:translateX(-50%);">1</span>
<span class="t" style="top:271px;font-size:11.5px;line-height:1;color:#161718;left:212.5px;transform:translateX(-50%);">2</span>
<span class="t" style="top:302px;font-size:11.5px;line-height:1;color:#161718;left:212.5px;transform:translateX(-50%);">3</span>
<span class="t" style="top:240px;font-size:11.5px;line-height:1;color:#23587f;letter-spacing:-0.133px;left:233px;">Inside-to-Outside-Permit-All</span>
<span class="t" style="top:271px;font-size:11.5px;line-height:1;color:#23587f;letter-spacing:-0.157px;left:233px;">intrazone-default</span>
<span class="t" style="top:302px;font-size:11.5px;line-height:1;color:#23587f;letter-spacing:-0.128px;left:233px;">interzone-default</span>
<span class="t" style="top:240px;font-size:11.5px;line-height:1;color:#23587f;letter-spacing:-0.398px;left:383px;">none</span>
<span class="t" style="top:271px;font-size:11.5px;line-height:1;color:#23587f;letter-spacing:-0.398px;left:383px;">none</span>
<span class="t" style="top:302px;font-size:11.5px;line-height:1;color:#23587f;letter-spacing:-0.398px;left:383px;">none</span>
<span class="t" style="top:240px;font-size:11.5px;line-height:1;color:#161718;letter-spacing:-0.337px;left:483px;">universal</span>
<span class="t" style="top:271px;font-size:11.5px;line-height:1;color:#161718;letter-spacing:-0.257px;left:483px;">intrazone</span>
<span class="t" style="top:271px;font-size:11.5px;line-height:1;color:#23587f;letter-spacing:-0.516px;left:553px;">any</span>
<span class="t" style="top:271px;font-size:11.5px;line-height:1;color:#23587f;letter-spacing:-0.516px;left:653px;">any</span>
<span class="t" style="top:271px;font-size:11.5px;line-height:1;color:#23587f;letter-spacing:-0.516px;left:763px;">any</span>
<span class="t" style="top:271px;font-size:11.5px;line-height:1;color:#23587f;letter-spacing:-0.516px;left:863px;">any</span>
<span class="t" style="top:271px;font-size:11.5px;line-height:1;color:#23587f;letter-spacing:-0.516px;left:1063px;">any</span>
<span class="t" style="top:271px;font-size:11.5px;line-height:1;color:#23587f;letter-spacing:-0.516px;left:1173px;">any</span>
<span class="t" style="top:271px;font-size:11.5px;line-height:1;color:#23587f;letter-spacing:-0.516px;left:1273px;">any</span>
<span class="t" style="top:240px;font-size:11.5px;line-height:1;color:#23587f;letter-spacing:-0.516px;left:763px;">any</span>
<span class="t" style="top:240px;font-size:11.5px;line-height:1;color:#23587f;letter-spacing:-0.516px;left:863px;">any</span>
<span class="t" style="top:240px;font-size:11.5px;line-height:1;color:#23587f;letter-spacing:-0.516px;left:1063px;">any</span>
<span class="t" style="top:240px;font-size:11.5px;line-height:1;color:#23587f;letter-spacing:-0.516px;left:1173px;">any</span>
<span class="t" style="top:240px;font-size:11.5px;line-height:1;color:#23587f;letter-spacing:-0.516px;left:1273px;">any</span>
<span class="t" style="top:271px;font-size:11.5px;line-height:1;color:#23587f;letter-spacing:-0.516px;left:1373px;">any</span>
<span class="t" style="top:271px;font-size:11.5px;line-height:1;color:#161718;letter-spacing:-0.361px;left:963px;">(intrazone)</span>
<span class="t" style="top:240px;font-size:11.5px;line-height:1;color:#23587f;letter-spacing:-0.398px;left:1573px;">none</span>
<span class="t" style="top:271px;font-size:11.5px;line-height:1;color:#23587f;letter-spacing:-0.398px;left:1573px;">none</span>
<span class="t" style="top:302px;font-size:11.5px;line-height:1;color:#23587f;letter-spacing:-0.398px;left:1573px;">none</span>
<span class="t" style="top:271px;font-size:11.5px;line-height:1;color:#23587f;letter-spacing:-0.398px;left:1693px;">none</span>
<span class="t" style="top:240px;font-size:11.5px;line-height:1;color:#161718;letter-spacing:-0.097px;left:1788px;">31913</span>
<span class="t" style="top:271px;font-size:11.5px;line-height:1;color:#161718;letter-spacing:-0.148px;left:1788px;">2716</span>
<span class="t" style="top:302px;font-size:11.5px;line-height:1;color:#161718;left:1788px;">-</span>
<svg style="left:553.7px;top:242.8px;" width="15" height="11" viewBox="0 0 15 11"><rect x=".2" y=".2" width="14.200" height="5.900" rx=".9" fill="#141517"/><path d="M1.400 5l2.700-3.700h2.100l-2.700 3.700zM5.600 5l2.700-3.700h2.100l-2.700 3.700zM9.800 5l2.700-3.700h.9v1.700l-1.500 2zM1.200 3.400l1.500-2.100h-1.500z" fill="#b3921b"/><path d="M.9 5v5.200M13.700 5v5.200" stroke="#141517" stroke-width="1.300"/></svg>
<span class="t" style="top:242px;font-size:11.5px;line-height:1;color:#23587f;letter-spacing:-0.448px;left:572.3px;">Inside</span>
<svg style="left:963.7px;top:242.8px;" width="15" height="11" viewBox="0 0 15 11"><rect x=".2" y=".2" width="14.200" height="5.900" rx=".9" fill="#141517"/><path d="M1.400 5l2.700-3.700h2.100l-2.700 3.700zM5.600 5l2.700-3.700h2.100l-2.700 3.700zM9.800 5l2.700-3.700h.9v1.700l-1.500 2zM1.200 3.400l1.500-2.100h-1.500z" fill="#b3921b"/><path d="M.9 5v5.200M13.700 5v5.200" stroke="#141517" stroke-width="1.300"/></svg>
<span class="t" style="top:242px;font-size:11.5px;line-height:1;color:#23587f;letter-spacing:-0.234px;left:982px;">Outside</span>
<svg style="left:652px;top:239px;" width="19" height="18" viewBox="0 0 19 18"><g fill="none" stroke="#1f4d68" stroke-width="1.300"><rect x="1.300" y="1.300" width="13" height="9.200" rx="1.800"/><rect x="4" y="4.600" width="13" height="9" rx="1.800" fill="#858585"/><path d="M10.500 13.600v2.800M7 16.700h7"/></g></svg>
<span class="t" style="top:242px;font-size:11.5px;line-height:1;color:#23587f;letter-spacing:-0.299px;left:673.5px;">Inside -10.1.1.0</span>
<svg style="left:1373px;top:241px;" width="16" height="15" viewBox="0 0 16 15"><g fill="none" stroke-width="1.100"><path d="M2.200 2.200l1.600-.8 9.200 9.400 .6 2.200-2.200-.600L2 3.800z" stroke="#94761c"/><path d="M2.200 12.800l-.800-.800 6.500-6.800M3.600 13.600L10 7" stroke="#1f4d68"/><path d="M2.200 12.800l1.400.8" stroke="#1f4d68"/><path d="M9.300 3.200a2.700 2.700 0 0 1 3.400-1.200l-1.500 1.800 .8 1.300 1.500.2 1.300-1.700a2.700 2.700 0 0 1-3.300 3.300" stroke="#1f4d68"/></g></svg>
<span class="t" style="top:242px;font-size:11.5px;line-height:1;color:#23587f;letter-spacing:-0.194px;left:1392px;">application-...</span>
<svg style="left:1474px;top:241px;" width="14" height="14" viewBox="0 0 14 14"><circle cx="7" cy="7" r="5.800" fill="none" stroke="#1b6e28" stroke-width="1.200"/><path d="M4.200 7.200l2 2 3.600-4" fill="none" stroke="#1b6e28" stroke-width="1.200"/></svg>
<svg style="left:1474px;top:272px;" width="14" height="14" viewBox="0 0 14 14"><circle cx="7" cy="7" r="5.800" fill="none" stroke="#1b6e28" stroke-width="1.200"/><path d="M4.200 7.200l2 2 3.600-4" fill="none" stroke="#1b6e28" stroke-width="1.200"/></svg>
<span class="t" style="top:243px;font-size:11.5px;line-height:1;color:#23587f;letter-spacing:-0.097px;left:1492.3px;">Allow</span>
<span class="t" style="top:274px;font-size:11.5px;line-height:1;color:#23587f;letter-spacing:-0.097px;left:1492.3px;">Allow</span>
<svg style="left:1474px;top:302px;" width="16" height="17" viewBox="0 0 16 17"><rect x="1" y=".8" width="13.600" height="15" rx="1" fill="none" stroke="#98303a" stroke-width="1.200"/><circle cx="7.800" cy="8.300" r="4.700" fill="none" stroke="#98303a" stroke-width="1.200"/><path d="M4.500 5l6.600 6.600" stroke="#98303a" stroke-width="1.200"/></svg>
<span class="t" style="top:305px;font-size:11.5px;line-height:1;color:#23587f;letter-spacing:-0.215px;left:1492.3px;">Deny</span>
<svg style="left:1694px;top:241px;" width="14" height="13" viewBox="0 0 14 13"><rect x=".8" y=".8" width="11.800" height="10.800" rx="1" fill="none" stroke="#1f4f74" stroke-width="1.400"/><path d="M2.500 3.500h1.200M5 3.500h6M2.500 6.200h1.200M5 6.200h6M2.500 8.900h1.200M5 8.900h6" stroke="#1f4f74" stroke-width="1.100"/></svg>
<svg style="left:1694px;top:303px;" width="14" height="13" viewBox="0 0 14 13"><rect x=".8" y=".8" width="11.800" height="10.800" rx="1" fill="none" stroke="#1f4f74" stroke-width="1.400"/><path d="M2.500 3.500h1.200M5 3.500h6M2.500 6.200h1.200M5 6.200h6M2.500 8.900h1.200M5 8.900h6" stroke="#1f4f74" stroke-width="1.100"/></svg>
<svg style="left:338px;top:272px;" width="14" height="14" viewBox="338 272 14 14"><path d="M344.38 275.55L344.48 274.23L345.52 274.23L345.62 275.55L347.00 276.13L348.01 275.26L348.74 275.99L347.87 277.00L348.45 278.38L349.77 278.48L349.77 279.52L348.45 279.62L347.87 281.00L348.74 282.01L348.01 282.74L347.00 281.87L345.62 282.45L345.52 283.77L344.48 283.77L344.38 282.45L343.00 281.87L341.99 282.74L341.26 282.01L342.13 281.00L341.55 279.62L340.23 279.52L340.23 278.48L341.55 278.38L342.13 277.00L341.26 275.99L341.99 275.26L343.00 276.13z" fill="none" stroke="#1f6c2b" stroke-width="1.200" stroke-linejoin="round"/><circle cx="345" cy="279" r="2.700" fill="none" stroke="#1f6c2b" stroke-width=".9"/><circle cx="345" cy="279" r="1" fill="#1f6c2b"/></svg>
<svg style="left:335px;top:300px;" width="20" height="20" viewBox="335 300 20 20"><path d="M341.79 303.07L341.92 301.34L343.28 301.34L343.41 303.07L345.23 303.83L346.55 302.69L347.51 303.65L346.37 304.97L347.13 306.79L348.86 306.92L348.86 308.28L347.13 308.41L346.37 310.23L347.51 311.55L346.55 312.51L345.23 311.37L343.41 312.13L343.28 313.86L341.92 313.86L341.79 312.13L339.97 311.37L338.65 312.51L337.69 311.55L338.83 310.23L338.07 308.41L336.34 308.28L336.34 306.92L338.07 306.79L338.83 304.97L337.69 303.65L338.65 302.69L339.97 303.83z" fill="none" stroke="#1f6c2b" stroke-width="1.100" stroke-linejoin="round"/><path d="M344.57 305.77L344.69 303.84L346.11 303.84L346.23 305.77L348.09 306.54L349.54 305.26L350.54 306.26L349.26 307.71L350.03 309.57L351.96 309.69L351.96 311.11L350.03 311.23L349.26 313.09L350.54 314.54L349.54 315.54L348.09 314.26L346.23 315.03L346.11 316.96L344.69 316.96L344.57 315.03L342.71 314.26L341.26 315.54L340.26 314.54L341.54 313.09L340.77 311.23L338.84 311.11L338.84 309.69L340.77 309.57L341.54 307.71L340.26 306.26L341.26 305.26L342.71 306.54z" fill="#837b66" stroke="#a03a22" stroke-width="1.100" stroke-linejoin="round"/><circle cx="345.400" cy="310.400" r="2.200" fill="none" stroke="#a03a22" stroke-width="1.100"/></svg>
<div style="left:198px;top:841px;width:1675px;height:19px;background:#7d7d7d;"></div>
<div style="left:219px;top:843px;width:1128px;height:17px;background:#646464;"></div>
<svg style="left:204px;top:846.5px;" width="8" height="10" viewBox="0 0 8 10"><path d="M7 .5v9L1.500 5z" fill="#3c3c3c"/></svg>
<svg style="left:1857px;top:846.5px;" width="8" height="10" viewBox="0 0 8 10"><path d="M1 .5v9l5.500-4.500z" fill="#222"/></svg>
<div style="left:198px;top:862px;width:1675px;height:1px;background:#6f7170;"></div>
<div style="left:198px;top:863px;width:1675px;height:26px;background:#7b7d7c;"></div>
<svg style="left:203.29999999999998px;top:868.2px;" width="16.6" height="16.6" viewBox="0 0 16 16"><circle cx="8" cy="8" r="6.700" fill="none" stroke="#1b527c" stroke-width="1"/><path d="M8 5v6M5 8h6" stroke="#1b527c" stroke-width="1"/></svg>
<span class="t" style="top:872px;font-size:11.5px;line-height:1;color:#2a2c2e;letter-spacing:0.010px;left:222.5px;">Add</span>
<svg style="left:252.7px;top:868.2px;" width="16.6" height="16.6" viewBox="0 0 16 16"><circle cx="8" cy="8" r="6.700" fill="none" stroke="#8e5a5c" stroke-width="1"/><path d="M4.500 8h7" stroke="#8e5a5c" stroke-width="1.100"/></svg>
<span class="t" style="top:872px;font-size:11.5px;line-height:1;color:#585c5e;letter-spacing:0.125px;left:272px;">Delete</span>
<svg style="left:315.7px;top:868.2px;" width="16.6" height="16.6" viewBox="0 0 16 16"><circle cx="8" cy="8" r="6.700" fill="none" stroke="#4f7088" stroke-width="1"/><rect x="4.500" y="4.500" width="4.500" height="4.500" rx="1" fill="none" stroke="#4f7088" stroke-width="1"/><rect x="7" y="7" width="4.500" height="4.500" rx="1" fill="none" stroke="#4f7088" stroke-width="1"/></svg>
<span class="t" style="top:872px;font-size:11.5px;line-height:1;color:#585c5e;letter-spacing:-0.013px;left:335px;">Clone</span>
<svg style="left:374.5px;top:868.5px;" width="17" height="17" viewBox="0 0 17 17"><circle cx="8.500" cy="8.500" r="6" fill="none" stroke="#8f6650" stroke-width="1.500" stroke-dasharray="2.400 1.500"/><circle cx="8.500" cy="8.500" r="4.900" fill="none" stroke="#8f6650" stroke-width=".9"/><circle cx="8.500" cy="8.500" r="2.100" fill="none" stroke="#8f6650" stroke-width=".9"/></svg>
<span class="t" style="top:872px;font-size:11.5px;line-height:1;color:#585c5e;letter-spacing:0.299px;left:393.5px;">Override</span>
<svg style="left:452px;top:871px;" width="12" height="12" viewBox="0 0 12 12"><circle cx="6" cy="6" r="4" fill="none" stroke="#5c8a62" stroke-width="1.300" stroke-dasharray="1.600 1"/><circle cx="6" cy="6" r="3.200" fill="none" stroke="#5c8a62" stroke-width=".9"/><circle cx="6" cy="6" r="1.400" fill="none" stroke="#5c8a62" stroke-width=".9"/></svg>
<span class="t" style="top:872px;font-size:11.5px;line-height:1;color:#585c5e;letter-spacing:0.021px;left:468px;">Revert</span>
<svg style="left:511.2px;top:868.2px;" width="16.6" height="16.6" viewBox="0 0 16 16"><circle cx="8" cy="8" r="6.700" fill="none" stroke="#4f9058" stroke-width="1"/><path d="M4.800 8.200l2.200 2.200 4-4.500" fill="none" stroke="#4f9058" stroke-width="1.100"/></svg>
<span class="t" style="top:872px;font-size:11.5px;line-height:1;color:#585c5e;letter-spacing:-0.135px;left:532.5px;">Enable</span>
<svg style="left:577.2px;top:868.2px;" width="16.6" height="16.6" viewBox="0 0 16 16"><circle cx="8" cy="8" r="6.700" fill="none" stroke="#8e5a5c" stroke-width="1"/><path d="M3.500 3.500l9 9" stroke="#8e5a5c" stroke-width="1.100"/></svg>
<span class="t" style="top:872px;font-size:11.5px;line-height:1;color:#585c5e;letter-spacing:0.092px;left:598px;">Disable</span>
<span class="t" style="top:872px;font-size:11.5px;line-height:1;color:#2a2c2e;letter-spacing:0.094px;left:650px;">Move</span>
<svg style="left:683px;top:873px;" width="8" height="6" viewBox="0 0 8 6"><path d="M1 1l3 3 3-3" fill="none" stroke="#2a2c2e" stroke-width="1.300"/></svg>
<div style="left:698px;top:870px;width:1px;height:16px;background:#8c8e8d;"></div>
<svg style="left:706.2px;top:868.2px;" width="16.6" height="16.6" viewBox="0 0 16 16"><circle cx="8" cy="8" r="6.700" fill="none" stroke="#1f5a85" stroke-width="1"/><rect x="5" y="4" width="6" height="8" rx="1" fill="none" stroke="#1f5a85" stroke-width="1"/><path d="M6.500 9.500c1-1 2-3 1.500-3.500s-1 2 1.500 3" fill="none" stroke="#1f5a85" stroke-width=".7"/></svg>
<span class="t" style="top:872px;font-size:11.5px;line-height:1;color:#2a2c2e;letter-spacing:0.022px;left:725px;">PDF/CSV</span>
<div style="left:782px;top:871px;width:14px;height:14px;background:#868686;border:1px solid #2e3032;border-radius:2px;box-sizing:border-box;"></div>
<span class="t" style="top:872px;font-size:11.5px;line-height:1;color:#2a2c2e;letter-spacing:0.082px;left:800px;">Highlight Unused Rules</span>
<div style="left:927px;top:871px;width:14px;height:14px;background:#868686;border:1px solid #2e3032;border-radius:2px;box-sizing:border-box;"></div>
<span class="t" style="top:872px;font-size:11.5px;line-height:1;color:#2a2c2e;letter-spacing:-0.011px;left:944.5px;">View Rulebase as Groups</span>
<div style="left:1084px;top:870px;width:1px;height:16px;background:#8c8e8d;"></div>
<span class="t" style="top:872px;font-size:11.5px;line-height:1;color:#2a2c2e;letter-spacing:0.102px;left:1095px;">Reset Rule Hit Counter</span>
<svg style="left:1220px;top:873px;" width="8" height="6" viewBox="0 0 8 6"><path d="M1 1l3 3 3-3" fill="none" stroke="#2a2c2e" stroke-width="1.300"/></svg>
<span class="t" style="top:872px;font-size:11.5px;line-height:1;color:#585c5e;letter-spacing:0.006px;left:1238px;">Group</span>
<svg style="left:1274px;top:873px;" width="8" height="6" viewBox="0 0 8 6"><path d="M1 1l3 3 3-3" fill="none" stroke="#585c5e" stroke-width="1.300"/></svg>
<div style="left:1289px;top:870px;width:1px;height:16px;background:#8c8e8d;"></div>
<span class="t" style="top:872px;font-size:11.5px;line-height:1;color:#2a2c2e;letter-spacing:0.148px;left:1301px;">Test Policy Match</span>
<div style="left:3px;top:889px;width:1870px;height:23px;background:#02070a;"></div>
<span class="t" style="top:898px;font-size:11.5px;line-height:1;color:#52575c;letter-spacing:0.134px;left:15.5px;">admin</span>
<span class="t" style="top:898px;font-size:11.5px;line-height:1;color:#525e69;letter-spacing:0.135px;left:61px;">Logout</span>
<span class="t" style="top:898px;font-size:11.5px;line-height:1;color:#525e69;letter-spacing:0.289px;left:109px;">Last Login Time: 09/01/2023 16:51:34</span>
<span class="t" style="top:898px;font-size:11.5px;line-height:1;color:#525e69;letter-spacing:0.232px;left:324px;">Session Expire Time: 10/14/2023 21:25:53</span>
<div style="left:55px;top:896px;width:1px;height:13px;background:#3a3f44;"></div>
<div style="left:103px;top:896px;width:1px;height:13px;background:#3a3f44;"></div>
<div style="left:318px;top:896px;width:1px;height:13px;background:#3a3f44;"></div>
<div style="left:580px;top:896px;width:1px;height:13px;background:#3a3f44;"></div>
<div style="left:1634px;top:896px;width:1px;height:13px;background:#3a3f44;"></div>
<div style="left:1704px;top:896px;width:1px;height:13px;background:#3a3f44;"></div>
<svg style="left:556px;top:895px;" width="15" height="14" viewBox="0 0 15 14"><path d="M7.500 1.500l6.300 11.500h-12.600z" fill="none" stroke="#a04a28" stroke-width="1.100"/><path d="M7.500 5.500v4M7.500 10.500v1.200" stroke="#a04a28" stroke-width="1.100"/></svg>
<svg style="left:1611.5px;top:898px;" width="17" height="12" viewBox="0 0 17 12"><rect x=".8" y=".8" width="14.800" height="9.800" rx="1" fill="none" stroke="#62676b" stroke-width="1.100"/><path d="M1 1.500l7.200 5 7.200-5" fill="none" stroke="#62676b" stroke-width="1.100"/></svg>
<svg style="left:1645px;top:896px;" width="18" height="15" viewBox="0 0 18 15"><g fill="none" stroke="#50555a" stroke-width="1.100"><path d="M7.500 2.500h9M7.500 7.500h9M7.500 12.500h9"/><path d="M1 2.500l1.300 1.300 2.200-2.800M1 7.500l1.300 1.300 2.200-2.800M1 12.500l1.300 1.300 2.200-2.800"/></g></svg>
<span class="t" style="top:898px;font-size:11.5px;line-height:1;color:#42474c;letter-spacing:-0.481px;left:1666.5px;">Tasks</span>
<span class="t" style="top:899px;font-size:11.5px;line-height:1;color:#42474c;letter-spacing:-0.271px;left:1712px;">Language</span>
<svg style="left:1772px;top:894px;" width="24" height="18" viewBox="1772 894 24 18"><g fill="#8b3418"><path d="M1773.900 903.500L1781.500 895.900 1784.200 898.700 1776.700 906.200z"/><path d="M1784.600 908L1791.600 901 1794.300 903.700 1787.300 910.700z"/><path d="M1787.200 895.900L1790 898.700 1783.600 905.100 1784.300 907.900 1781.500 910.700 1778.100 907.400 1784.500 901 1784.400 898.700z"/></g></svg>
<span class="t" style="top:894px;font-size:17px;line-height:1;color:#757575;font-weight:700;letter-spacing:-0.521px;left:1798px;">paloalto</span>
<span class="t" style="top:912px;font-size:4.5px;line-height:1;color:#757575;font-weight:700;letter-spacing:0.344px;left:1829px;">NETWORKS</span>
<div style="left:398px;top:294px;width:1080px;height:419px;background:#ffffff;box-shadow:0 8px 18px 0 rgba(0,0,0,.58);border-radius:4px 4px 2px 2px;"></div>
<div style="left:398px;top:294px;width:1080px;height:36px;background:#dddfe0;border-radius:4px 4px 0 0;"></div>
<div style="left:398px;top:330px;width:1080px;height:1px;background:#a3a5a6;"></div>
<span class="t" style="top:304px;font-size:16px;line-height:1;color:#1c1c1c;letter-spacing:-0.264px;left:410px;">Security Policy Rule</span>
<svg style="left:1448px;top:304px;" width="17" height="17" viewBox="0 0 17 17"><circle cx="8.500" cy="8.500" r="7" fill="none" stroke="#1c1c1c" stroke-width="1.300"/><text x="8.500" y="12.500" font-family="Liberation Sans" font-size="11" font-weight="700" fill="#1c1c1c" text-anchor="middle">?</text></svg>
<span class="t" style="top:348px;font-size:13px;line-height:1;color:#6a6a6a;letter-spacing:-0.321px;left:419.5px;">General</span>
<span class="t" style="top:348px;font-size:13px;line-height:1;color:#1e1e1e;font-weight:700;letter-spacing:-0.846px;left:488px;">Source</span>
<span class="t" style="top:348px;font-size:13px;line-height:1;color:#6a6a6a;letter-spacing:0.087px;left:551.5px;">Destination</span>
<span class="t" style="top:348px;font-size:13px;line-height:1;color:#6a6a6a;letter-spacing:0.126px;left:642px;">Application</span>
<span class="t" style="top:348px;font-size:13px;line-height:1;color:#6a6a6a;letter-spacing:-0.118px;left:731px;">Service/URL Category</span>
<span class="t" style="top:348px;font-size:13px;line-height:1;color:#6a6a6a;letter-spacing:0.051px;left:882px;">Actions</span>
<div style="left:477px;top:349px;width:1px;height:13px;background:#c4c4c4;"></div>
<div style="left:540px;top:349px;width:1px;height:13px;background:#c4c4c4;"></div>
<div style="left:631px;top:349px;width:1px;height:13px;background:#c4c4c4;"></div>
<div style="left:720px;top:349px;width:1px;height:13px;background:#c4c4c4;"></div>
<div style="left:871px;top:349px;width:1px;height:13px;background:#c4c4c4;"></div>
<div style="left:551px;top:364.5px;width:67px;height:1px;background:#e0605f;"></div>
<div style="left:408px;top:371px;width:1056px;height:1px;background:#c9c9c9;"></div>
<div style="left:477px;top:368.3px;width:61px;height:2.7px;background:#1f9ee4;border-radius:2px 2px 0 0;"></div>
<div style="left:408px;top:380px;width:261px;height:238px;background:#fff;border:1px solid #c4c9cb;box-sizing:border-box;"></div>
<div style="left:409px;top:403px;width:259px;height:1px;background:#b9bcbd;"></div>
<div style="left:409px;top:404px;width:259px;height:23px;background:#eceeed;"></div>
<div style="left:409px;top:427px;width:259px;height:1px;background:#a9acad;"></div>
<div style="left:434px;top:404px;width:1px;height:23px;background:#b9bcbd;"></div>
<div style="left:666px;top:404px;width:1px;height:23px;background:#b4b7b8;"></div>
<div style="left:415px;top:407.3px;width:13.5px;height:13.5px;background:#fff;border:1.9px solid #2f87c1;border-radius:2.8px;box-sizing:border-box;"></div>
<span class="t" style="top:410px;font-size:10px;line-height:1;color:#333;font-weight:700;letter-spacing:0.105px;left:440px;">SOURCE ZONE</span>
<svg style="left:521.2px;top:411px;" width="10.5" height="6.5" viewBox="0 0 10.5 6.5"><path d="M.8 5.7L5.25 1.200 9.7 5.7" fill="none" stroke="#555" stroke-width="1.200"/></svg>
<div style="left:409px;top:590px;width:259px;height:1px;background:#c9cccd;"></div>
<div style="left:409px;top:591px;width:259px;height:26px;background:#f4f6f5;"></div>
<svg style="left:413.8px;top:596.1px;" width="17" height="17" viewBox="0 0 17 17"><circle cx="8.500" cy="8.500" r="7.200" fill="none" stroke="#2479ae" stroke-width="1.050"/><path d="M4.700 8.500h7.600" stroke="#2479ae" stroke-width="1.050"/><path d="M8.500 4.700v7.600" stroke="#2479ae" stroke-width="1.050"/></svg>
<span class="t" style="top:599px;font-size:12px;line-height:1;color:#6a6a6a;letter-spacing:-0.120px;left:433px;">Add</span>
<svg style="left:463.5px;top:596.1px;" width="17" height="17" viewBox="0 0 17 17"><circle cx="8.500" cy="8.500" r="7.200" fill="none" stroke="#d9534f" stroke-width="1.050"/><path d="M4.700 8.500h7.600" stroke="#d9534f" stroke-width="1.050"/></svg>
<span class="t" style="top:599px;font-size:12px;line-height:1;color:#6a6a6a;letter-spacing:-0.031px;left:483px;">Delete</span>
<div style="left:413px;top:386px;width:14px;height:14px;background:#fff;border:1.3px solid #5f6a72;border-radius:2.2px;box-sizing:border-box;"></div>
<span class="t" style="top:386px;font-size:12px;line-height:1;color:#666;letter-spacing:-0.562px;left:431px;">Any</span>
<div style="left:672px;top:380px;width:261px;height:238px;background:#fff;border:1px solid #c4c9cb;box-sizing:border-box;"></div>
<div style="left:673px;top:403px;width:259px;height:1px;background:#b9bcbd;"></div>
<div style="left:673px;top:404px;width:259px;height:23px;background:#eceeed;"></div>
<div style="left:673px;top:427px;width:259px;height:1px;background:#a9acad;"></div>
<div style="left:698px;top:404px;width:1px;height:23px;background:#b9bcbd;"></div>
<div style="left:930px;top:404px;width:1px;height:23px;background:#b4b7b8;"></div>
<div style="left:679px;top:407.3px;width:13.5px;height:13.5px;background:#fff;border:1.9px solid #2f87c1;border-radius:2.8px;box-sizing:border-box;"></div>
<span class="t" style="top:410px;font-size:10px;line-height:1;color:#333;font-weight:700;letter-spacing:-0.078px;left:704px;">SOURCE ADDRESS</span>
<svg style="left:803.7px;top:411px;" width="10.5" height="6.5" viewBox="0 0 10.5 6.5"><path d="M.8 5.7L5.25 1.200 9.7 5.7" fill="none" stroke="#555" stroke-width="1.200"/></svg>
<div style="left:673px;top:590px;width:259px;height:1px;background:#c9cccd;"></div>
<div style="left:673px;top:591px;width:259px;height:26px;background:#f4f6f5;"></div>
<svg style="left:677.8px;top:596.1px;" width="17" height="17" viewBox="0 0 17 17"><circle cx="8.500" cy="8.500" r="7.200" fill="none" stroke="#2479ae" stroke-width="1.050"/><path d="M4.700 8.500h7.600" stroke="#2479ae" stroke-width="1.050"/><path d="M8.500 4.700v7.600" stroke="#2479ae" stroke-width="1.050"/></svg>
<span class="t" style="top:599px;font-size:12px;line-height:1;color:#6a6a6a;letter-spacing:-0.120px;left:697px;">Add</span>
<svg style="left:727.5px;top:596.1px;" width="17" height="17" viewBox="0 0 17 17"><circle cx="8.500" cy="8.500" r="7.200" fill="none" stroke="#d9534f" stroke-width="1.050"/><path d="M4.700 8.500h7.600" stroke="#d9534f" stroke-width="1.050"/></svg>
<span class="t" style="top:599px;font-size:12px;line-height:1;color:#6a6a6a;letter-spacing:-0.031px;left:747px;">Delete</span>
<div style="left:677px;top:386px;width:14px;height:14px;background:#fff;border:1.3px solid #5f6a72;border-radius:2.2px;box-sizing:border-box;"></div>
<span class="t" style="top:386px;font-size:12px;line-height:1;color:#666;letter-spacing:-0.562px;left:695px;">Any</span>
<div style="left:937px;top:380px;width:261px;height:238px;background:#fff;border:1px solid #c4c9cb;box-sizing:border-box;"></div>
<div style="left:938px;top:403px;width:259px;height:1px;background:#b9bcbd;"></div>
<div style="left:938px;top:404px;width:259px;height:23px;background:#eceeed;"></div>
<div style="left:938px;top:427px;width:259px;height:1px;background:#a9acad;"></div>
<div style="left:963px;top:404px;width:1px;height:23px;background:#b9bcbd;"></div>
<div style="left:1195px;top:404px;width:1px;height:23px;background:#b4b7b8;"></div>
<div style="left:944px;top:407.3px;width:13.5px;height:13.5px;background:#fff;border:1.9px solid #2f87c1;border-radius:2.8px;box-sizing:border-box;"></div>
<span class="t" style="top:410px;font-size:10px;line-height:1;color:#333;font-weight:700;letter-spacing:-0.033px;left:969px;">SOURCE USER</span>
<svg style="left:1048.7px;top:411px;" width="10.5" height="6.5" viewBox="0 0 10.5 6.5"><path d="M.8 5.7L5.25 1.200 9.7 5.7" fill="none" stroke="#555" stroke-width="1.200"/></svg>
<div style="left:938px;top:590px;width:259px;height:1px;background:#c9cccd;"></div>
<div style="left:938px;top:591px;width:259px;height:26px;background:#f4f6f5;"></div>
<svg style="left:942.8px;top:596.1px;" width="17" height="17" viewBox="0 0 17 17"><circle cx="8.500" cy="8.500" r="7.200" fill="none" stroke="#2479ae" stroke-width="1.050"/><path d="M4.700 8.500h7.600" stroke="#2479ae" stroke-width="1.050"/><path d="M8.500 4.700v7.600" stroke="#2479ae" stroke-width="1.050"/></svg>
<span class="t" style="top:599px;font-size:12px;line-height:1;color:#6a6a6a;letter-spacing:-0.120px;left:962px;">Add</span>
<svg style="left:991.5px;top:596.1px;" width="17" height="17" viewBox="0 0 17 17"><circle cx="8.500" cy="8.500" r="7.200" fill="none" stroke="#efb5b3" stroke-width="1.050"/><path d="M4.700 8.500h7.600" stroke="#efb5b3" stroke-width="1.050"/></svg>
<span class="t" style="top:599px;font-size:12px;line-height:1;color:#bcbcbc;letter-spacing:-0.031px;left:1011px;">Delete</span>
<div style="left:941px;top:382.5px;width:143px;height:19.3px;background:#fff;border:1px solid #bfc3c5;border-radius:3px;box-sizing:border-box;"></div>
<span class="t" style="top:385px;font-size:12px;line-height:1;color:#555;letter-spacing:-0.620px;left:945px;">any</span>
<svg style="left:1066px;top:388.5px;" width="10.5" height="6.5" viewBox="0 0 10.5 6.5"><path d="M.8 .8L5.25 5.3 9.7 .8" fill="none" stroke="#444" stroke-width="1.200"/></svg>
<div style="left:1201px;top:380px;width:261px;height:238px;background:#fff;border:1px solid #c4c9cb;box-sizing:border-box;"></div>
<div style="left:1202px;top:403px;width:259px;height:1px;background:#b9bcbd;"></div>
<div style="left:1202px;top:404px;width:259px;height:23px;background:#eceeed;"></div>
<div style="left:1202px;top:427px;width:259px;height:1px;background:#a9acad;"></div>
<div style="left:1227px;top:404px;width:1px;height:23px;background:#b9bcbd;"></div>
<div style="left:1459px;top:404px;width:1px;height:23px;background:#b4b7b8;"></div>
<div style="left:1208px;top:407.3px;width:13.5px;height:13.5px;background:#fff;border:1.9px solid #2f87c1;border-radius:2.8px;box-sizing:border-box;"></div>
<span class="t" style="top:410px;font-size:10px;line-height:1;color:#333;font-weight:700;letter-spacing:0.131px;left:1233px;">SOURCE DEVICE</span>
<svg style="left:1324.2px;top:411px;" width="10.5" height="6.5" viewBox="0 0 10.5 6.5"><path d="M.8 5.7L5.25 1.200 9.7 5.7" fill="none" stroke="#555" stroke-width="1.200"/></svg>
<div style="left:1202px;top:590px;width:259px;height:1px;background:#c9cccd;"></div>
<div style="left:1202px;top:591px;width:259px;height:26px;background:#f4f6f5;"></div>
<svg style="left:1206.8px;top:596.1px;" width="17" height="17" viewBox="0 0 17 17"><circle cx="8.500" cy="8.500" r="7.200" fill="none" stroke="#2479ae" stroke-width="1.050"/><path d="M4.700 8.500h7.600" stroke="#2479ae" stroke-width="1.050"/><path d="M8.500 4.700v7.600" stroke="#2479ae" stroke-width="1.050"/></svg>
<span class="t" style="top:599px;font-size:12px;line-height:1;color:#6a6a6a;letter-spacing:-0.120px;left:1226px;">Add</span>
<svg style="left:1255.5px;top:596.1px;" width="17" height="17" viewBox="0 0 17 17"><circle cx="8.500" cy="8.500" r="7.200" fill="none" stroke="#efb5b3" stroke-width="1.050"/><path d="M4.700 8.500h7.600" stroke="#efb5b3" stroke-width="1.050"/></svg>
<span class="t" style="top:599px;font-size:12px;line-height:1;color:#bcbcbc;letter-spacing:-0.031px;left:1275px;">Delete</span>
<div style="left:1205px;top:382.5px;width:143px;height:19.3px;background:#fff;border:1px solid #bfc3c5;border-radius:3px;box-sizing:border-box;"></div>
<span class="t" style="top:385px;font-size:12px;line-height:1;color:#555;letter-spacing:-0.620px;left:1209px;">any</span>
<svg style="left:1330px;top:388.5px;" width="10.5" height="6.5" viewBox="0 0 10.5 6.5"><path d="M.8 .8L5.25 5.3 9.7 .8" fill="none" stroke="#444" stroke-width="1.200"/></svg>
<div style="left:409px;top:428px;width:259px;height:1px;background:#5cade0;"></div>
<div style="left:409px;top:429px;width:259px;height:26px;background:#deedf6;"></div>
<div style="left:409px;top:455px;width:259px;height:1px;background:#5cade0;"></div>
<div style="left:434px;top:429px;width:1px;height:26px;background:#cfd8dd;"></div>
<svg style="left:435px;top:429px;" width="6" height="6" viewBox="0 0 6 6"><path d="M0 0h5.500L0 5.500z" fill="#d81920"/></svg>
<div style="left:415px;top:432.5px;width:13px;height:13px;background:#1d82c1;border-radius:2.5px;"></div>
<svg style="left:415px;top:432.5px;" width="13" height="13" viewBox="0 0 13 13"><path d="M2.600 6.800l2.800 2.800 5-6" fill="none" stroke="#fff" stroke-width="1.300"/></svg>
<svg style="left:440.7px;top:436.6px;" width="15" height="11" viewBox="0 0 15 11"><rect x=".2" y=".2" width="14.200" height="5.900" rx=".9" fill="#111"/><path d="M1.400 5l2.700-3.700h2.100l-2.700 3.700zM5.600 5l2.700-3.700h2.100l-2.700 3.700zM9.800 5l2.700-3.700h.9v1.700l-1.500 2zM1.200 3.400l1.500-2.100h-1.500z" fill="#f4c417"/><path d="M.9 5v5.200M13.700 5v5.200" stroke="#111" stroke-width="1.300"/></svg>
<span class="t" style="top:435px;font-size:12px;line-height:1;color:#2b88c8;letter-spacing:-0.672px;left:459px;">Inside</span>
<div style="left:673px;top:428px;width:259px;height:1px;background:#5cade0;"></div>
<div style="left:673px;top:429px;width:259px;height:21px;background:#fff;"></div>
<div style="left:673px;top:429px;width:27px;height:21px;background:#deedf6;"></div>
<div style="left:673px;top:450px;width:259px;height:1px;background:#5cade0;"></div>
<div style="left:679px;top:432.5px;width:13px;height:13px;background:#1d82c1;border-radius:2.5px;"></div>
<svg style="left:679px;top:432.5px;" width="13" height="13" viewBox="0 0 13 13"><path d="M2.600 6.800l2.800 2.800 5-6" fill="none" stroke="#fff" stroke-width="1.300"/></svg>
<div style="left:700px;top:429px;width:231px;height:20px;background:#fff;border:1.500px solid #2b8fdc;border-radius:3px;box-sizing:border-box;"></div>
<div style="left:705px;top:432px;width:76px;height:14px;background:#c9c9c9;"></div>
<span class="t" style="top:433px;font-size:12px;line-height:1;color:#333;letter-spacing:-0.546px;left:706px;">Inside -10.1.1.0</span>
<svg style="left:912.5px;top:436px;" width="11" height="6.5" viewBox="0 0 11 6.5"><path d="M.8 .8L5.5 5.3 10.2 .8" fill="none" stroke="#2f86c4" stroke-width="1.200"/></svg>
<div style="left:673px;top:625px;width:14px;height:14px;background:#fff;border:1.3px solid #5f6a72;border-radius:2.2px;box-sizing:border-box;"></div>
<span class="t" style="top:625px;font-size:12px;line-height:1;color:#5a5a5a;letter-spacing:-0.734px;left:692px;">Negate</span>
<div style="left:1312px;top:669px;width:75px;height:28px;background:#e3e5e6;border-radius:14px;"></div>
<span class="t" style="top:678px;font-size:12px;line-height:1;color:#b3b7b9;left:1349.5px;transform:translateX(-50%);">OK</span>
<div style="left:1393px;top:669px;width:75px;height:28px;background:#fff;border:1px solid #a7b1b8;border-radius:14px;box-sizing:border-box;"></div>
<span class="t" style="top:678px;font-size:12px;line-height:1;color:#2a2a2a;letter-spacing:-0.727px;left:1430.5px;transform:translateX(-50%);">Cancel</span>
<div style="left:0px;top:0px;width:3px;height:912px;background:linear-gradient(180deg,#7ca0be 0%,#7f9fbc 50%,#86a1bd 100%);"></div>
<div style="left:1873px;top:0px;width:2px;height:912px;background:#7ba0c5;"></div>
<svg style="left:3px;top:905px;" width="7" height="7" viewBox="0 0 7 7"><path d="M0 0v7h7A7 7 0 0 1 0 0z" fill="#8aa3bf"/></svg>
<svg style="left:1866px;top:905px;" width="7" height="7" viewBox="0 0 7 7"><path d="M7 0v7H0A7 7 0 0 0 7 0z" fill="#7ba0c5"/></svg>
</div></body></html>
